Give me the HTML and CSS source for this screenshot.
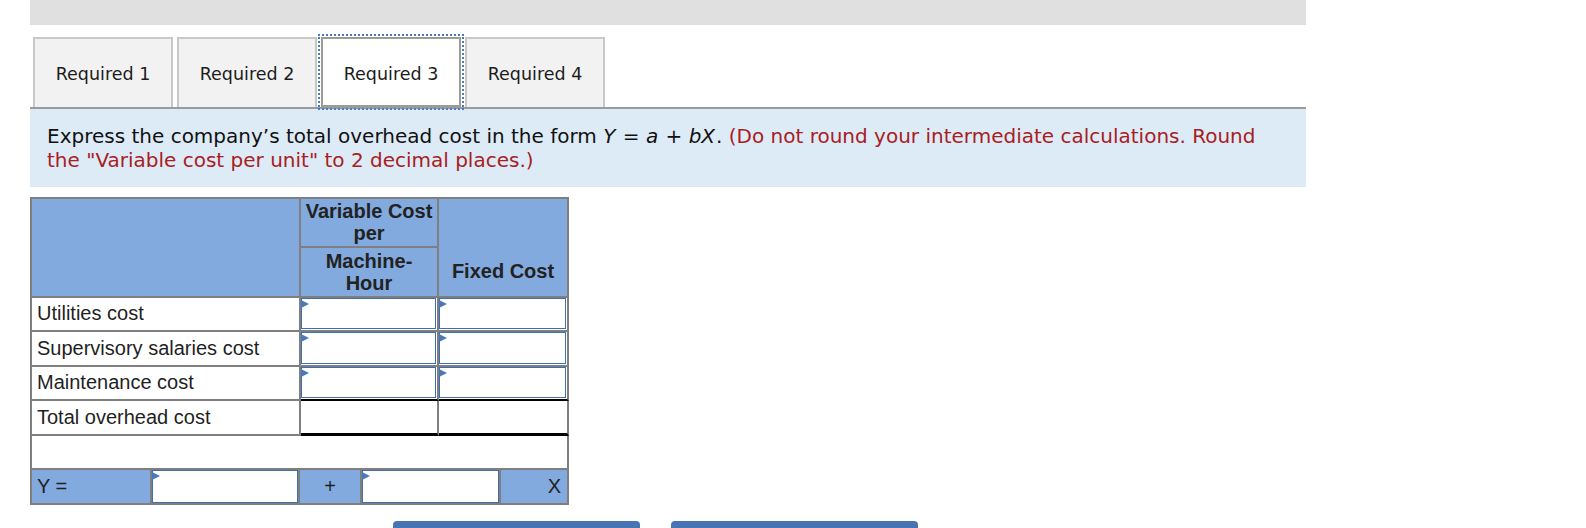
FILE: index.html
```html
<!DOCTYPE html>
<html>
<head>
<meta charset="utf-8">
<link rel="stylesheet" href="styles.css">
</head>
<body>
<div class="page">
  <div class="topbar"></div>
  <div class="tabs">
    <div class="tab">Required 1</div>
    <div class="tab">Required 2</div>
    <div class="tab active">Required 3</div>
    <div class="tab">Required 4</div>
  </div>
  <div class="instr">Express the company’s total overhead cost in the form <i>Y</i> = <i>a</i> + <i>bX</i>. <span class="red">(Do not round your intermediate calculations. Round the "Variable cost per unit" to 2 decimal places.)</span></div>
  <table class="grid">
    <colgroup><col class="c1"><col class="c2"><col class="c3"></colgroup>
    <tr class="h1"><th rowspan="2"></th><th>Variable Cost<br>per</th><th rowspan="2" class="fixed">Fixed Cost</th></tr>
    <tr class="h2"><th>Machine-<br>Hour</th></tr>
    <tr class="row"><td class="lbl">Utilities cost</td><td class="in"><div class="box"></div></td><td class="in"><div class="box"></div></td></tr>
    <tr class="row"><td class="lbl">Supervisory salaries cost</td><td class="in"><div class="box"></div></td><td class="in"><div class="box"></div></td></tr>
    <tr class="row"><td class="lbl">Maintenance cost</td><td class="in above"><div class="box"></div></td><td class="in above"><div class="box"></div></td></tr>
    <tr class="row"><td class="lbl">Total overhead cost</td><td class="tot"></td><td class="tot"></td></tr>
    <tr class="row"><td colspan="3"></td></tr>
    <tr class="row"><td colspan="3" class="eqcell">
      <div class="eqrow">
        <div class="eqlbl">Y =</div>
        <div class="eqin"><div class="box"></div></div>
        <div class="eqop">+</div>
        <div class="eqin eqin2"><div class="box"></div></div>
        <div class="eqx">X</div>
      </div>
    </td></tr>
  </table>
  <div class="navbtns">
    <div class="navbtn"></div>
    <div class="navbtn"></div>
  </div>
</div>
</body>
</html>
```
FILE: styles.css
```css
html, body {
  margin: 0;
  padding: 0;
  background: #fff;
  overflow: hidden;
}
.page {
  margin-left: 30px;
  width: 1276px;
}
.topbar {
  height: 25px;
  background: #e0e0e0;
}
.tabs {
  display: flex;
  gap: 4px;
  padding-left: 3px;
  margin-top: 12px;
  height: 70px;
  border-bottom: 2px solid #9b9b9b;
}
.tab {
  width: 140px;
  box-sizing: border-box;
  border: 2px solid #c8c8c8;
  border-bottom: none;
  padding-top: 2px;
  background: #f2f2f2;
  display: flex;
  align-items: center;
  justify-content: center;
  font: 17.5px "DejaVu Sans", Verdana, sans-serif;
  color: #1c1c1c;
}
.tab.active {
  background: #fff;
  border: 2px solid #9b9b9b;
  padding-top: 4px;
  outline: 2px dotted #4a7bbd;
  outline-offset: 1px;
}
.instr {
  background: #ddebf7;
  padding: 16px 30px 15px 17px;
  font: 20px/23.5px "DejaVu Sans", Verdana, sans-serif;
  color: #111;
}
.instr i {
  padding-right: 1px;
}
.red {
  color: #a8201e;
}
.grid {
  margin-top: 10px;
  border-collapse: separate;
  border-spacing: 0;
  table-layout: fixed;
  width: 539px;
  border-top: 2px solid #7f7f7f;
  border-left: 2px solid #7f7f7f;
  font: 20px "Liberation Sans", Arial, sans-serif;
  color: #1f1f1f;
}
.c1 { width: 269px; }
.c2 { width: 138px; }
.c3 { width: 130px; }
.grid th, .grid td {
  border-right: 2px solid #7f7f7f;
  border-bottom: 2px solid #7f7f7f;
  padding: 0;
}
.grid th {
  background: #82aade;
  font-weight: bold;
  line-height: 22px;
  text-align: center;
  vertical-align: middle;
  color: #222;
}
.grid th.fixed {
  vertical-align: bottom;
  padding-bottom: 14px;
}
.h1 { height: 48.5px; }
.h2 { height: 50px; }
.row { height: 34.6px; }
.lbl {
  padding-left: 5px !important;
  vertical-align: middle;
}
.in {
  padding: 0 1px 1px 0 !important;
  vertical-align: top;
}
.in.above {
  border-bottom-color: #000 !important;
}
.tot {
  border-bottom: 3px solid #000 !important;
}
.box {
  position: relative;
  box-sizing: border-box;
  height: 31.6px;
  border: 1px solid #3f6fb1;
  background: #fff;
}
.box::before {
  content: "";
  position: absolute;
  left: -1px;
  top: 1px;
  border-left: 8px solid #4a78b8;
  border-top: 4px solid transparent;
  border-bottom: 4px solid transparent;
}
.eqcell {
  vertical-align: top;
}
.eqrow {
  display: flex;
  height: 32.6px;
  background: #82aade;
}
.eqlbl {
  width: 120px;
  box-sizing: border-box;
  border-right: 2px solid #7f7f7f;
  padding-left: 5px;
  display: flex;
  align-items: center;
}
.eqin {
  width: 148px;
  box-sizing: border-box;
  border-right: 2px solid #7f7f7f;
  display: flex;
}
.eqin .box {
  flex: 1;
  height: auto;
}
.eqin2 {
  width: 139px;
}
.eqop {
  width: 62px;
  box-sizing: border-box;
  border-right: 2px solid #7f7f7f;
  display: flex;
  align-items: center;
  justify-content: center;
}
.eqx {
  flex: 1;
  display: flex;
  align-items: center;
  justify-content: flex-end;
  padding-right: 6px;
}
.navbtns {
  display: flex;
  gap: 31px;
  margin-left: 363px;
  margin-top: 16px;
}
.navbtn {
  width: 247px;
  height: 44px;
  border-radius: 4px;
  background: #4674b4;
}
```
